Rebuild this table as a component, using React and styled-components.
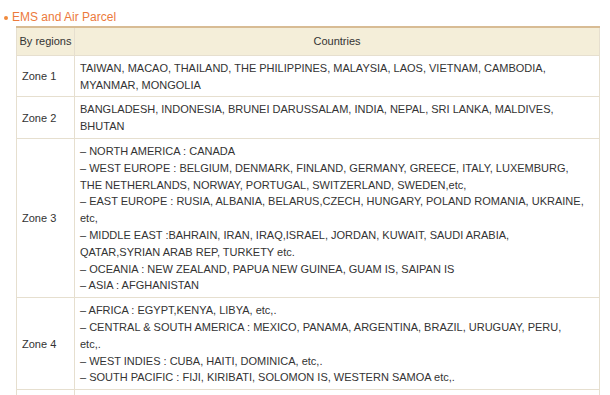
import React from "react";
import styled, { createGlobalStyle } from "styled-components";

const GlobalStyle = createGlobalStyle`
  body {
    margin: 0;
    background: #ffffff;
    font-family: "Liberation Sans", Arial, sans-serif;
    color: #333333;
  }
`;

const Page = styled.div`
  padding: 11px 10px 0 4px;
`;

const Title = styled.h3`
  display: flex;
  align-items: center;
  gap: 4px;
  margin: 0 0 2px 0;
  font-size: 12px;
  font-weight: normal;
  color: #ec7a3c;
  line-height: 13px;

  &::before {
    content: "";
    width: 4px;
    height: 4px;
    border-radius: 50%;
    background: #f08a3c;
  }
`;

const Table = styled.table`
  margin-left: 12px;
  width: 584px;
  table-layout: fixed;
  border-collapse: collapse;
  border-top: 2px solid #d8bc94;
  font-size: 11px;
  line-height: 16.8px;
`;

const Col = styled.col`
  width: ${({ $w }) => $w || "auto"};
`;

const HeadCell = styled.th`
  background: #f4eed9;
  font-weight: normal;
  text-align: center;
  white-space: nowrap;
  padding: 5px 2px;
  border: 1px solid #e6dfcf;
  border-top: none;
`;

const ZoneCell = styled.td`
  padding: 4px 5px 3px;
  border: 1px solid #e6dfcf;
  vertical-align: middle;
  white-space: nowrap;
`;

const ListCell = styled.td`
  padding: 4px 5px 3px;
  border: 1px solid #e6dfcf;
  height: ${({ $empty }) => ($empty ? "34px" : "auto")};
`;

const Line = styled.div``;

const zones = [
  {
    name: "Zone 1",
    lines: [
      "TAIWAN, MACAO, THAILAND, THE PHILIPPINES, MALAYSIA, LAOS, VIETNAM, CAMBODIA,",
      "MYANMAR, MONGOLIA",
    ],
  },
  {
    name: "Zone 2",
    lines: [
      "BANGLADESH, INDONESIA, BRUNEI DARUSSALAM, INDIA, NEPAL, SRI LANKA, MALDIVES,",
      "BHUTAN",
    ],
  },
  {
    name: "Zone 3",
    lines: [
      "– NORTH AMERICA : CANADA",
      "– WEST EUROPE : BELGIUM, DENMARK, FINLAND, GERMANY, GREECE, ITALY, LUXEMBURG,",
      "THE NETHERLANDS, NORWAY, PORTUGAL, SWITZERLAND, SWEDEN,etc,",
      "– EAST EUROPE : RUSIA, ALBANIA, BELARUS,CZECH, HUNGARY, POLAND ROMANIA, UKRAINE,",
      "etc,",
      "– MIDDLE EAST :BAHRAIN, IRAN, IRAQ,ISRAEL, JORDAN, KUWAIT, SAUDI ARABIA,",
      "QATAR,SYRIAN ARAB REP, TURKETY etc.",
      "– OCEANIA : NEW ZEALAND, PAPUA NEW GUINEA, GUAM IS, SAIPAN IS",
      "– ASIA : AFGHANISTAN",
    ],
  },
  {
    name: "Zone 4",
    lines: [
      "– AFRICA : EGYPT,KENYA, LIBYA, etc,.",
      "– CENTRAL & SOUTH AMERICA : MEXICO, PANAMA, ARGENTINA, BRAZIL, URUGUAY, PERU,",
      "etc,.",
      "– WEST INDIES : CUBA, HAITI, DOMINICA, etc,.",
      "– SOUTH PACIFIC : FIJI, KIRIBATI, SOLOMON IS, WESTERN SAMOA etc,.",
    ],
  },
];

export default function App() {
  return (
    <Page>
      <GlobalStyle />
      <Title>EMS and Air Parcel</Title>
      <Table>
        <colgroup>
          <Col $w="58px" />
          <Col />
        </colgroup>
        <thead>
          <tr>
            <HeadCell>By regions</HeadCell>
            <HeadCell>Countries</HeadCell>
          </tr>
        </thead>
        <tbody>
          {zones.map((z) => (
            <tr key={z.name}>
              <ZoneCell>{z.name}</ZoneCell>
              <ListCell>
                {z.lines.map((l, i) => (
                  <Line key={i}>{l}</Line>
                ))}
              </ListCell>
            </tr>
          ))}
          <tr>
            <ZoneCell />
            <ListCell $empty />
          </tr>
        </tbody>
      </Table>
    </Page>
  );
}
